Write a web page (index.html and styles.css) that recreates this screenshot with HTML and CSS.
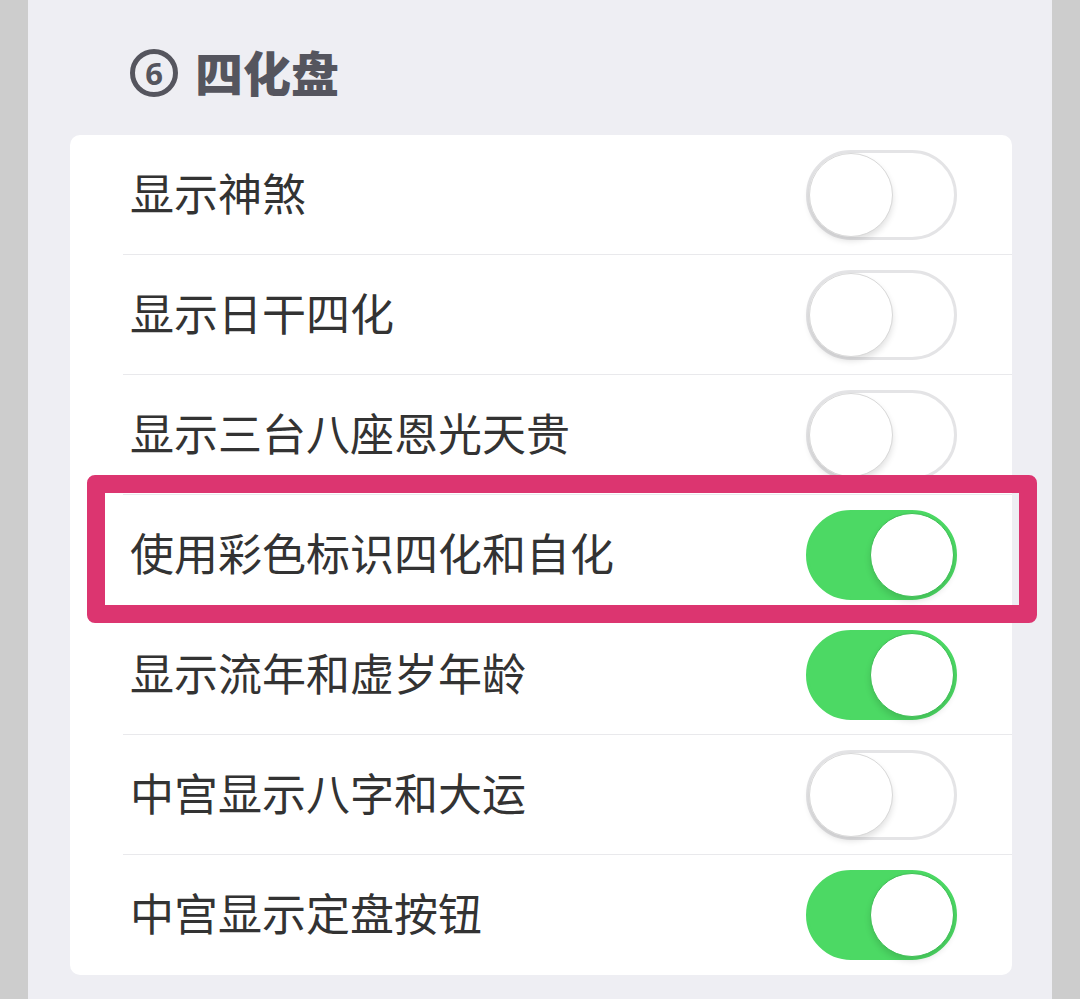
FILE: index.html
```html
<!DOCTYPE html>
<html lang="zh-CN">
<head>
  <meta charset="UTF-8" />
  <meta name="viewport" content="width=device-width, initial-scale=1.0"/>
  <title>四化盘</title>
  <link rel="stylesheet" href="styles.css">
</head>
<body>
  <div class="panel">
    <h2 class="section-title"><span class="num">6</span><span class="name">四化盘</span></h2>
    <div class="card">
      <div class="row">
        <span class="label">显示神煞</span>
        <span class="switch"></span>
      </div>
      <div class="row">
        <span class="label">显示日干四化</span>
        <span class="switch"></span>
      </div>
      <div class="row">
        <span class="label">显示三台八座恩光天贵</span>
        <span class="switch"></span>
      </div>
      <div class="row highlight">
        <span class="label">使用彩色标识四化和自化</span>
        <span class="switch on"></span>
      </div>
      <div class="row">
        <span class="label">显示流年和虚岁年龄</span>
        <span class="switch on"></span>
      </div>
      <div class="row">
        <span class="label">中宫显示八字和大运</span>
        <span class="switch"></span>
      </div>
      <div class="row">
        <span class="label">中宫显示定盘按钮</span>
        <span class="switch on"></span>
      </div>
    </div>
  </div>
</body>
</html>
```

FILE: styles.css
```css
body {
  margin: 0;
  background: #cdcdcd;
  font-family: "Noto Sans CJK SC", "Noto Sans", sans-serif;
  height: 999px;
  overflow: hidden;
}

.panel {
  margin: 0 28px;
  height: 999px;
  background: #eeeef3;
  padding-top: 45px;
  box-sizing: border-box;
}

.section-title {
  display: flex;
  align-items: center;
  gap: 17px;
  margin: 0 0 30px 102px;
  height: 60px;
  font-size: 48px;
  line-height: 60px;
  font-weight: 900;
  color: #55555e;
}

.section-title .name {
  margin-top: -8px;
}

.section-title .num {
  display: flex;
  align-items: center;
  justify-content: center;
  width: 48px;
  height: 48px;
  margin-top: -4px;
  border: 5px solid #55555e;
  border-radius: 50%;
  box-sizing: border-box;
  font-family: "Noto Sans", sans-serif;
  font-size: 31px;
  line-height: 1;
  font-weight: 700;
}

.card {
  margin: 0 40px 0 42px;
  background: #fff;
  border-radius: 10px;
}

.row {
  position: relative;
  display: flex;
  align-items: center;
  justify-content: space-between;
  height: 120px;
  margin-left: 53px;
  padding: 0 55px 0 7px;
  border-bottom: 1px solid #e9e9ec;
  box-sizing: border-box;
}

.row:last-child {
  border-bottom: none;
}

.label {
  font-size: 44px;
  color: #333;
  margin-bottom: 6px;
}

.switch {
  position: relative;
  width: 151px;
  height: 90px;
  border-radius: 45px;
  background: #fff;
  border: 3px solid #e4e4e6;
  box-sizing: border-box;
}

.switch::after {
  content: "";
  position: absolute;
  top: 0;
  left: 0;
  width: 84px;
  height: 84px;
  border-radius: 50%;
  background: #fff;
  border: 1px solid #d8d8d8;
  box-sizing: border-box;
  box-shadow: 0 4px 6px rgba(0, 0, 0, 0.12);
}

.switch.on {
  background: #4cd964;
  border-color: #4cd964;
}

.switch.on::after {
  left: auto;
  right: 0;
  border-color: #3fbf55;
}

.highlight::before {
  content: "";
  position: absolute;
  left: -36px;
  top: -20px;
  width: 950px;
  height: 148px;
  border: 18px solid #dc3570;
  border-radius: 8px;
  box-sizing: border-box;
  pointer-events: none;
}
```
